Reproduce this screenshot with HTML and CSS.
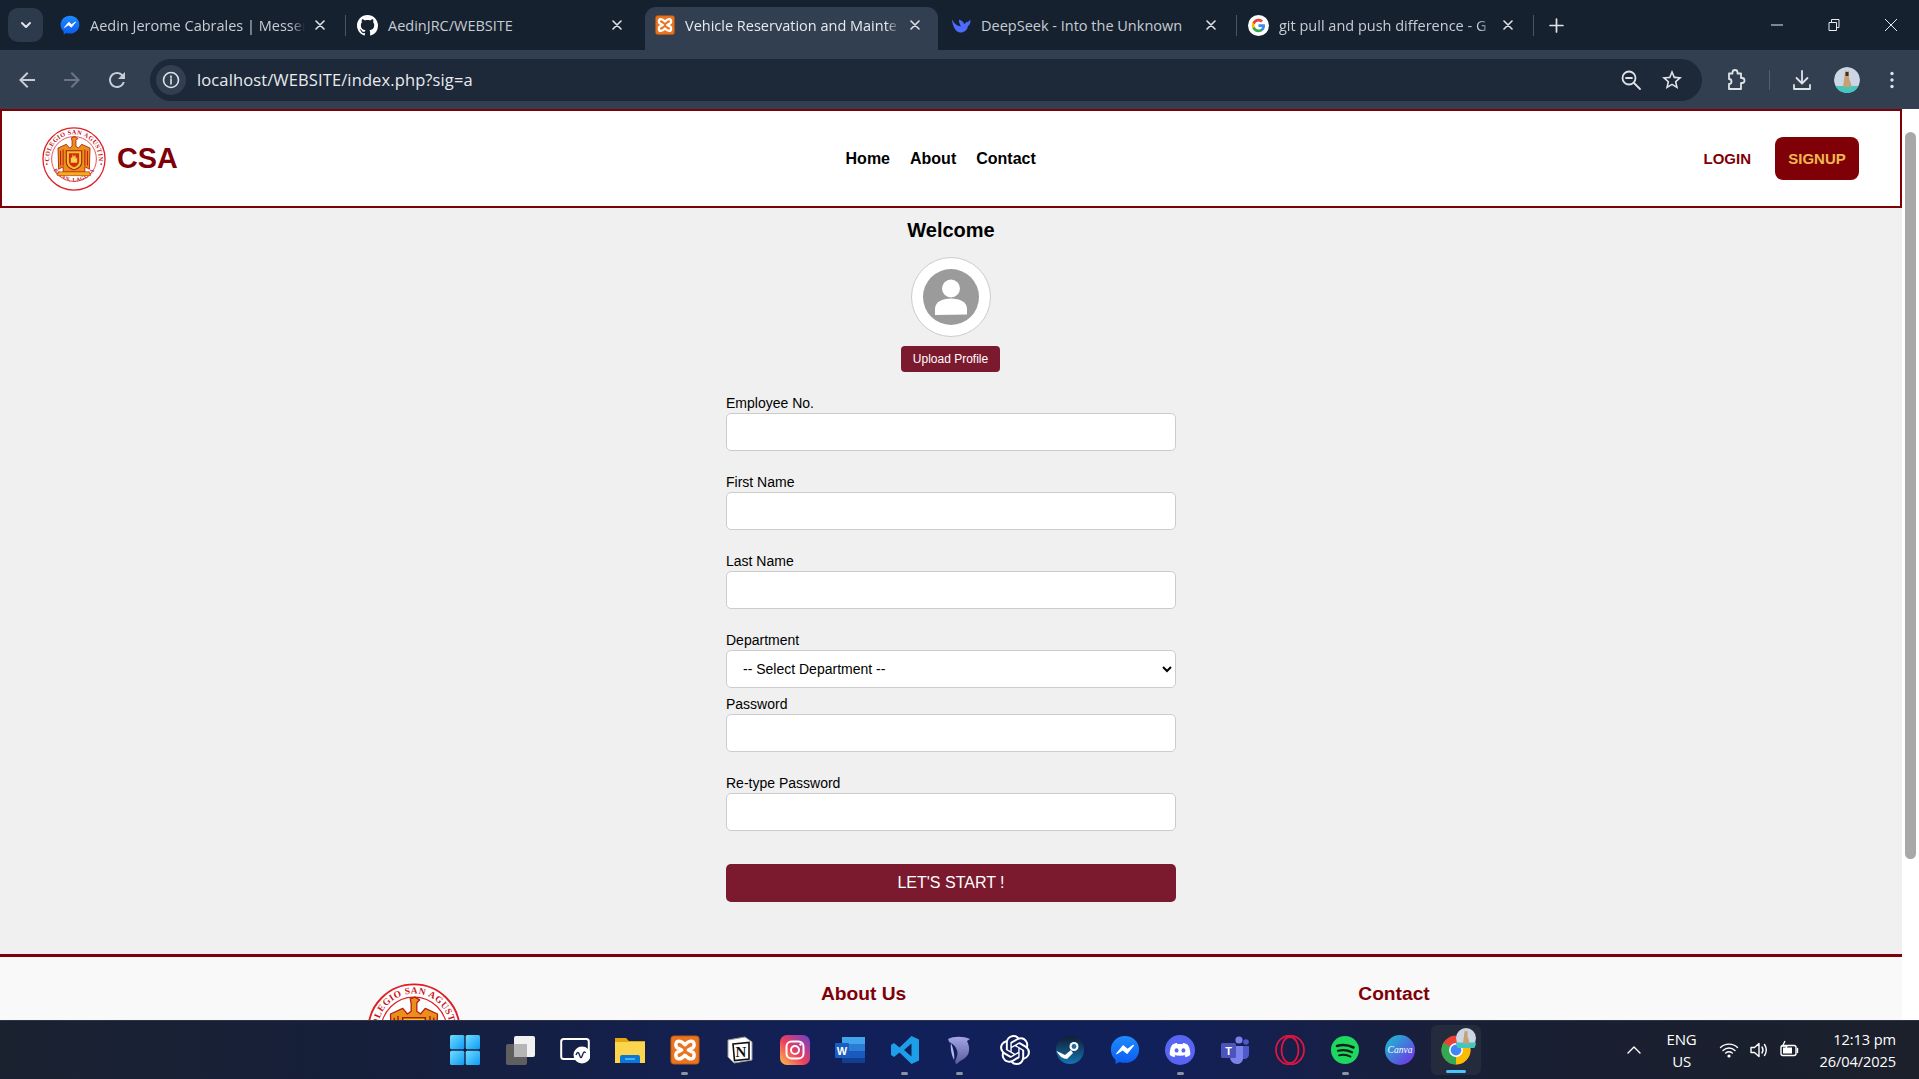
FILE: index.html
```html
<!DOCTYPE html>
<html lang="en">
<head>
<meta charset="utf-8">
<title>Vehicle Reservation and Maintenance</title>
<link rel="stylesheet" href="styles.css">
</head>
<body>
<svg class="defs" width="0" height="0" aria-hidden="true">
  <defs>
    <linearGradient id="msg" x1="0" y1="0" x2="0" y2="1"><stop offset="0" stop-color="#1f8bff"/><stop offset="1" stop-color="#0a5cf0"/></linearGradient>
    <linearGradient id="win" x1="0" y1="0" x2="1" y2="1"><stop offset="0" stop-color="#6fdcff"/><stop offset="1" stop-color="#0f9bf5"/></linearGradient>
    <linearGradient id="ig" x1="0" y1="1" x2="1" y2="0"><stop offset="0" stop-color="#fdc04a"/><stop offset=".45" stop-color="#ef3f5c"/><stop offset="1" stop-color="#6a3fd0"/></linearGradient>
    <linearGradient id="canva" x1="0" y1="0" x2="1" y2="1"><stop offset="0" stop-color="#12c6cf"/><stop offset="1" stop-color="#7a27e8"/></linearGradient>
    <linearGradient id="steam" x1="0" y1="0" x2="0" y2="1"><stop offset="0" stop-color="#111d33"/><stop offset="1" stop-color="#1474b0"/></linearGradient>
    <linearGradient id="dolphin" x1="0" y1="0" x2="0" y2="1"><stop offset="0" stop-color="#a3a5e6"/><stop offset="1" stop-color="#5c5a9c"/></linearGradient>
    <symbol id="seal" viewBox="0 0 100 100">
      <circle cx="50" cy="50" r="48.5" fill="#fff" stroke="#dd1f26" stroke-width="2"/>
      <circle cx="50" cy="50" r="35" fill="#fff" stroke="#dd1f26" stroke-width="1.2"/>
      <path id="sealTop" d="M12 56 A38.5 38.5 0 1 1 88 56" fill="none"/>
      <path id="sealBottom" d="M17 66 A38 38 0 0 0 83 66" fill="none"/>
      <text class="seal-text"><textPath href="#sealTop" startOffset="50%" text-anchor="middle">COLEGIO SAN AGUSTIN</textPath></text>
      <text class="seal-text seal-small"><textPath href="#sealBottom" startOffset="50%" text-anchor="middle">BIÑAN, LAGUNA</textPath></text>
      <circle cx="7.5" cy="58" r="1.4" fill="#dd1f26"/><circle cx="92.5" cy="58" r="1.4" fill="#dd1f26"/>
      <path d="M46 17 L51 15 L56 18 L53 21 L53 30 L57 33 L62 27 L75 33 L74 66 L67 62 L67 70 L33 70 L33 62 L26 66 L25 33 L38 27 L43 33 L47 30 L47 22 Z" fill="#e8901a" stroke="#b81f14" stroke-width="1.4" stroke-linejoin="round"/>
      <path d="M29 37 L29 60 M33 35 L33 60 M67 35 L67 60 M71 37 L71 60" stroke="#b81f14" stroke-width="1.6"/>
      <path d="M38 37 H62 V55 Q62 63 50 67 Q38 63 38 55 Z" fill="#f9c22a" stroke="#a51a12" stroke-width="1.6"/>
      <path d="M42 41 H58 V54 Q58 60 50 63 Q42 60 42 54 Z" fill="#d32a1a"/>
      <path d="M45 56 H55 V47 L53 50 L52 43 L50 47 L48 42 L47 49 L45 47 Z" fill="#f7d34b"/>
      <path d="M26 70 H74 L76 76 H24 Z" fill="#f3ab20" stroke="#b81f14" stroke-width=".9"/>
    </symbol>
    <symbol id="xampp" viewBox="0 0 32 32">
      <rect x="1" y="1" width="30" height="30" rx="3" fill="#ea7420"/>
      <rect x="1" y="1" width="30" height="30" rx="3" fill="none" stroke="#c0560f" stroke-width="1"/>
      <path d="M9.5 6.5 C5.5 6.5 5 13 9 14.2 L12.5 16 L9 17.8 C5 19 5.5 25.5 9.5 25.5 C12 25.5 14.2 23.6 16 21.6 C17.8 23.6 20 25.5 22.5 25.5 C26.5 25.5 27 19 23 17.8 L19.5 16 L23 14.2 C27 13 26.5 6.5 22.5 6.5 C20 6.5 17.8 8.4 16 10.4 C14.2 8.4 12 6.5 9.5 6.5 Z" fill="none" stroke="#fff" stroke-width="3.6" stroke-linejoin="round"/>
    </symbol>
    <symbol id="messenger" viewBox="0 0 32 32">
      <path d="M16 1 C7.5 1 1 7.2 1 15.6 C1 20 2.8 23.8 5.8 26.4 L6 31 L10.4 28.8 C12.2 29.4 14 29.7 16 29.7 C24.5 29.7 31 23.5 31 15.6 C31 7.2 24.5 1 16 1 Z" fill="url(#msg)"/>
      <path d="M7 20 L14 11.5 L18.6 15.3 L25 11 L18.2 19.6 L13.6 15.8 Z" fill="#fff" stroke="#fff" stroke-width="1.2" stroke-linejoin="round"/>
    </symbol>
  </defs>
</svg>

<div class="tabstrip">
  <div class="tab-search"><svg class="i12" viewBox="0 0 12 12"><path d="M2 4 L6 8 L10 4" class="ln2"/></svg></div>
  <div class="tab">
    <svg class="favicon" viewBox="0 0 32 32"><use href="#messenger"/></svg>
    <span class="tab-title">Aedin Jerome Cabrales | Messen</span>
    <svg class="tab-x" viewBox="0 0 10 10"><path d="M1 1 L9 9 M9 1 L1 9" class="ln15"/></svg>
  </div>
  <div class="tab tab-sep">
    <svg class="favicon favicon-lg" viewBox="0 0 16 16"><path fill="#fff" d="M8 0C3.58 0 0 3.58 0 8c0 3.54 2.29 6.53 5.47 7.59.4.07.55-.17.55-.38 0-.19-.01-.82-.01-1.49-2.01.37-2.53-.49-2.69-.94-.09-.23-.48-.94-.82-1.13-.28-.15-.68-.52-.01-.53.63-.01 1.08.58 1.23.82.72 1.21 1.87.87 2.33.66.07-.52.28-.87.51-1.07-1.78-.2-3.64-.89-3.64-3.95 0-.87.31-1.59.82-2.15-.08-.2-.36-1.02.08-2.12 0 0 .67-.21 2.2.82.64-.18 1.32-.27 2-.27.68 0 1.36.09 2 .27 1.53-1.04 2.2-.82 2.2-.82.44 1.1.16 1.92.08 2.12.51.56.82 1.27.82 2.15 0 3.07-1.87 3.75-3.65 3.95.29.25.54.73.54 1.48 0 1.07-.01 1.93-.01 2.2 0 .21.15.46.55.38A8.013 8.013 0 0016 8c0-4.42-3.58-8-8-8z"/></svg>
    <span class="tab-title tab-title-plain">AedinJRC/WEBSITE</span>
    <svg class="tab-x" viewBox="0 0 10 10"><path d="M1 1 L9 9 M9 1 L1 9" class="ln15"/></svg>
  </div>
  <div class="tab tab-active">
    <svg class="favicon" viewBox="0 0 32 32"><use href="#xampp"/></svg>
    <span class="tab-title tab-title-active">Vehicle Reservation and Mainte</span>
    <svg class="tab-x" viewBox="0 0 10 10"><path d="M1 1 L9 9 M9 1 L1 9" class="ln15"/></svg>
  </div>
  <div class="tab">
    <svg class="favicon" viewBox="0 0 24 24"><path fill="#4d6bfe" d="M1 5 C2 7 4 10 6 11.5 C8 13 10.5 14 12 13.4 C10.4 11 9.4 8.4 9.4 5.4 C12.4 6.4 15 8.4 16.2 11 C17 9.6 18 9 19.2 8.4 C21 8 22.2 7 23 5 C24 8.6 22.6 12 20.2 13.4 C20 17.6 16 21 11.2 21 C6 21 2 14 1 5 Z"/></svg>
    <span class="tab-title tab-title-plain">DeepSeek - Into the Unknown</span>
    <svg class="tab-x" viewBox="0 0 10 10"><path d="M1 1 L9 9 M9 1 L1 9" class="ln15"/></svg>
  </div>
  <div class="tab tab-sep">
    <svg class="favicon favicon-lg" viewBox="0 0 24 24"><circle cx="12" cy="12" r="12" fill="#fff"/><g transform="translate(3.6 3.6) scale(.7)"><path fill="#4285f4" d="M22.56 12.25c0-.78-.07-1.53-.2-2.25H12v4.26h5.92c-.26 1.37-1.04 2.53-2.21 3.31v2.77h3.57c2.08-1.92 3.28-4.74 3.28-8.09z"/><path fill="#34a853" d="M12 23c2.97 0 5.46-.98 7.28-2.66l-3.57-2.77c-.98.66-2.23 1.06-3.71 1.06-2.86 0-5.29-1.93-6.16-4.53H2.18v2.84C3.99 20.53 7.7 23 12 23z"/><path fill="#fbbc05" d="M5.84 14.09c-.22-.66-.35-1.36-.35-2.09s.13-1.43.35-2.09V7.07H2.18C1.43 8.55 1 10.22 1 12s.43 3.45 1.18 4.93l2.85-2.22.81-.62z"/><path fill="#ea4335" d="M12 5.38c1.62 0 3.06.56 4.21 1.64l3.15-3.15C17.45 2.09 14.97 1 12 1 7.7 1 3.99 3.47 2.18 7.07l3.66 2.84c.87-2.6 3.3-4.53 6.16-4.53z"/></g></svg>
    <span class="tab-title">git pull and push difference - G</span>
    <svg class="tab-x" viewBox="0 0 10 10"><path d="M1 1 L9 9 M9 1 L1 9" class="ln15"/></svg>
  </div>
  <div class="tab-new tab-sep"><svg class="i14" viewBox="0 0 14 14"><path d="M7 1 V13 M1 7 H13" class="ln15"/></svg></div>
  <div class="win-controls">
    <svg class="win-ctl" viewBox="0 0 14 14"><path d="M1 7 H13" class="ln1"/></svg>
    <svg class="win-ctl" viewBox="0 0 14 14"><path d="M2 4.5 H9.5 V12.5 H2 Z M4.5 4.5 V1.5 H12 V9.5 H9.5" class="ln1"/></svg>
    <svg class="win-ctl" viewBox="0 0 14 14"><path d="M1 1 L13 13 M13 1 L1 13" class="ln1"/></svg>
  </div>
</div>

<div class="toolbar">
  <svg class="tb-icon" viewBox="0 0 24 24"><path fill="#c7ccd3" d="M20 11H7.83l5.59-5.59L12 4l-8 8 8 8 1.41-1.41L7.83 13H20v-2z"/></svg>
  <svg class="tb-icon tb-dim" viewBox="0 0 24 24"><path fill="#6e7683" d="M4 11h12.17l-5.59-5.59L12 4l8 8-8 8-1.41-1.41L16.17 13H4v-2z"/></svg>
  <svg class="tb-icon" viewBox="0 0 24 24"><path fill="#c7ccd3" d="M17.65 6.35A7.958 7.958 0 0 0 12 4c-4.42 0-7.99 3.58-7.99 8s3.57 8 7.99 8c3.73 0 6.84-2.55 7.73-6h-2.08A5.99 5.99 0 0 1 12 18c-3.31 0-6-2.69-6-6s2.69-6 6-6c1.66 0 3.14.69 4.22 1.78L13 11h7V4l-2.35 2.35z"/></svg>
  <div class="omnibox">
    <span class="info-chip"><svg class="i18" viewBox="0 0 18 18"><circle cx="9" cy="9" r="7.5" class="ln15"/><path d="M9 8 V13 M9 5 V6.6" class="ln15"/></svg></span>
    <span class="url">localhost/WEBSITE/index.php?sig=a</span>
    <svg class="omni-icon" viewBox="0 0 24 24"><circle cx="10" cy="10" r="6.5" class="ln18"/><path d="M7 10 H13 M15 15 L21 21" class="ln18"/></svg>
    <svg class="omni-icon" viewBox="0 0 24 24"><path fill="#dfe3e8" d="M22 9.24l-7.19-.62L12 2 9.19 8.63 2 9.24l5.46 4.73L5.82 21 12 17.27 18.18 21l-1.63-7.03L22 9.24zM12 15.4l-3.76 2.27 1-4.28-3.32-2.88 4.38-.38L12 6.1l1.71 4.04 4.38.38-3.32 2.88 1 4.28L12 15.4z"/></svg>
  </div>
  <svg class="tb-icon tb-ext" viewBox="0 0 24 24"><path d="M6 5.5 H9.5 V4.5 A2.5 2.5 0 0 1 14.5 4.5 V5.5 H18 V10 H19 A2.5 2.5 0 0 1 19 15 H18 V21 H6 V16 A2.5 2.5 0 0 0 6 11 Z" class="ln18"/></svg>
  <span class="tb-sep"></span>
  <svg class="tb-icon tb-dl" viewBox="0 0 24 24"><path d="M12 3 V15 M6.5 10 L12 15.5 L17.5 10 M4 17 V21 H20 V17" class="ln18"/></svg>
  <svg class="tb-avatar" viewBox="0 0 26 26"><circle cx="13" cy="13" r="13" fill="#cdd6e4"/><path d="M0 19 H26 A13 13 0 0 1 0 19 Z" fill="#44c5bd"/><path d="M11 6 L11.5 3 L13 5 L14.5 3 L15 6 L15 11 L18 20 H9 L10 13 Z" fill="#c7a074"/><path d="M11.5 5 h3 v4 h-3 z" fill="#3d3027"/></svg>
  <svg class="tb-icon tb-menu" viewBox="0 0 24 24"><circle cx="12" cy="5.5" r="1.7" fill="#dfe3e8"/><circle cx="12" cy="12" r="1.7" fill="#dfe3e8"/><circle cx="12" cy="18.5" r="1.7" fill="#dfe3e8"/></svg>
</div>

<div class="viewport">
  <div class="page">
    <header class="site-header">
      <div class="brand">
        <svg class="brand-logo" viewBox="0 0 100 100"><use href="#seal"/></svg>
        <span class="brand-name">CSA</span>
      </div>
      <nav class="site-nav">
        <a class="nav-link">Home</a>
        <a class="nav-link">About</a>
        <a class="nav-link">Contact</a>
      </nav>
      <div class="auth">
        <a class="login">LOGIN</a>
        <a class="signup">SIGNUP</a>
      </div>
    </header>

    <main class="signup-main">
      <h2 class="welcome">Welcome</h2>
      <div class="avatar">
        <svg class="avatar-icon" viewBox="0 0 56 56"><circle cx="28" cy="28" r="28" fill="#9b9b9b"/><circle cx="28" cy="19.5" r="9" fill="#fff"/><path d="M12 46 V40 C12 33 19 29.5 28 29.5 C37 29.5 44 33 44 40 V45.5 Z" fill="#fff"/></svg>
      </div>
      <button class="upload-btn" type="button">Upload Profile</button>
      <form class="signup-form">
        <div class="field"><label class="field-label">Employee No.</label><input class="field-input" type="text"></div>
        <div class="field"><label class="field-label">First Name</label><input class="field-input" type="text"></div>
        <div class="field"><label class="field-label">Last Name</label><input class="field-input" type="text"></div>
        <div class="field field-tight"><label class="field-label">Department</label>
          <select class="field-input field-select"><option>-- Select Department --</option></select></div>
        <div class="field"><label class="field-label">Password</label><input class="field-input" type="password"></div>
        <div class="field"><label class="field-label">Re-type Password</label><input class="field-input" type="password"></div>
        <button class="start-btn" type="button">LET'S START !</button>
      </form>
    </main>

    <footer class="site-footer">
      <svg class="footer-logo" viewBox="0 0 100 100"><use href="#seal"/></svg>
      <h3 class="footer-head footer-about">About Us</h3>
      <h3 class="footer-head footer-contact">Contact</h3>
    </footer>
  </div>
  <div class="scrollbar"><div class="scroll-thumb"></div></div>
</div>

<div class="taskbar">
  <div class="task-icons">
    <div class="task"><svg class="tico" viewBox="0 0 30 30"><rect x="0" y="0" width="14.3" height="14.3" rx="1.5" fill="url(#win)"/><rect x="15.7" y="0" width="14.3" height="14.3" rx="1.5" fill="url(#win)"/><rect x="0" y="15.7" width="14.3" height="14.3" rx="1.5" fill="url(#win)"/><rect x="15.7" y="15.7" width="14.3" height="14.3" rx="1.5" fill="url(#win)"/></svg></div>
    <div class="task"><svg class="tico" viewBox="0 0 30 30"><rect x="9" y="1" width="21" height="21" rx="2" fill="#f1f1f1"/><rect x="1" y="9" width="21" height="21" rx="2" fill="#5f5f5f"/><rect x="9" y="9" width="13" height="13" fill="#b5b5b5"/></svg></div>
    <div class="task"><svg class="tico" viewBox="0 0 30 30"><rect x="1.2" y="4" width="27.6" height="20" rx="2.5" fill="none" stroke="#fff" stroke-width="2"/><circle cx="22" cy="20" r="8.5" fill="#fff"/><path d="M16 20 q2 -5 3.5 0 t3 0 t3 -2" fill="none" stroke="#1a2550" stroke-width="1.4"/></svg></div>
    <div class="task"><svg class="tico" viewBox="0 0 30 30"><path d="M0 3 H11 L14 6 H30 V28 H0 Z" fill="#e3a80e"/><rect x="0" y="7" width="30" height="21" fill="#fcd54f"/><path d="M5 28 V22 Q5 20 7 20 H23 Q25 20 25 22 V28 Z" fill="#0a78d4"/><path d="M10 24 H20" stroke="#60c4ff" stroke-width="1.5"/></svg></div>
    <div class="task task-run"><svg class="tico" viewBox="0 0 32 32"><use href="#xampp"/></svg></div>
    <div class="task"><svg class="tico" viewBox="0 0 30 30"><path d="M3 5 L20 2 L27 7 V25 L9 28 L3 22 Z" fill="#fff" stroke="#999" stroke-width="1"/><path d="M8 9 L24 7.5 V24 L9.5 25.5 Z" fill="#fff" stroke="#111" stroke-width="1.6"/><text x="16" y="22" class="notion-n">N</text></svg></div>
    <div class="task"><svg class="tico" viewBox="0 0 30 30"><rect width="30" height="30" rx="7" fill="url(#ig)"/><rect x="6.5" y="6.5" width="17" height="17" rx="5" fill="none" stroke="#fff" stroke-width="2"/><circle cx="15" cy="15" r="4" fill="none" stroke="#fff" stroke-width="2"/><circle cx="20.5" cy="9.5" r="1.2" fill="#fff"/></svg></div>
    <div class="task"><svg class="tico" viewBox="0 0 30 30"><rect x="7" y="2" width="23" height="7" fill="#41a5ee"/><rect x="7" y="9" width="23" height="7" fill="#2b7cd3"/><rect x="7" y="16" width="23" height="7" fill="#185abd"/><rect x="7" y="23" width="23" height="5" fill="#103f91"/><rect x="0" y="8" width="14" height="15" rx="1" fill="#1a5cc0"/><text x="7" y="20" class="word-w">W</text></svg></div>
    <div class="task task-run"><svg class="tico" viewBox="0 0 30 30"><path d="M21.5 1 L29 4.5 V25.5 L21.5 29 L9.5 17.5 L4 22 L1 20 V10 L4 8 L9.5 12.5 Z M21.5 8.5 L14 15 L21.5 21.5 Z" fill="#1e9ee8" fill-rule="evenodd"/></svg></div>
    <div class="task task-run"><svg class="tico" viewBox="0 0 30 30"><path d="M3 4 C9 1 18 1 25 4 L22 6 C25 12 25 18 21 22 C18 25 14 26 12 29 C10 29 10 26 11 24 C13 20 13 16 11 13 C10 11 8 9 6 8 C5 8 4 7 3 4 Z" fill="url(#dolphin)"/><path d="M6 8 C8 13 10 20 9 25 C7 21 5 14 6 8 Z" fill="#b7b8ee"/></svg></div>
    <div class="task"><svg class="tico" viewBox="0 0 24 24"><path fill="#fff" d="M22.282 9.821a5.985 5.985 0 0 0-.516-4.91 6.046 6.046 0 0 0-6.51-2.9A6.065 6.065 0 0 0 4.981 4.18a5.985 5.985 0 0 0-3.998 2.9 6.046 6.046 0 0 0 .743 7.097 5.98 5.98 0 0 0 .51 4.911 6.051 6.051 0 0 0 6.515 2.9A5.985 5.985 0 0 0 13.26 24a6.056 6.056 0 0 0 5.772-4.206 5.99 5.99 0 0 0 3.997-2.9 6.056 6.056 0 0 0-.747-7.073zM13.26 22.43a4.476 4.476 0 0 1-2.876-1.04l.141-.081 4.779-2.758a.795.795 0 0 0 .392-.681v-6.737l2.02 1.168a.071.071 0 0 1 .038.052v5.583a4.504 4.504 0 0 1-4.494 4.494zM3.6 18.304a4.47 4.47 0 0 1-.535-3.014l.142.085 4.783 2.759a.771.771 0 0 0 .78 0l5.843-3.369v2.332a.08.08 0 0 1-.033.062L9.74 19.95a4.5 4.5 0 0 1-6.14-1.646zM2.34 7.896a4.485 4.485 0 0 1 2.366-1.973V11.6a.766.766 0 0 0 .388.676l5.815 3.355-2.02 1.168a.076.076 0 0 1-.071 0l-4.83-2.786A4.504 4.504 0 0 1 2.34 7.872zm16.597 3.855l-5.833-3.387L15.119 7.2a.076.076 0 0 1 .071 0l4.83 2.791a4.494 4.494 0 0 1-.676 8.105v-5.678a.79.79 0 0 0-.407-.667zm2.01-3.023l-.141-.085-4.774-2.782a.776.776 0 0 0-.785 0L9.409 9.23V6.897a.066.066 0 0 1 .028-.061l4.83-2.787a4.5 4.5 0 0 1 6.68 4.66zm-12.64 4.135l-2.02-1.164a.08.08 0 0 1-.038-.057V6.075a4.5 4.5 0 0 1 7.375-3.453l-.142.08L8.704 5.46a.795.795 0 0 0-.393.681zm1.097-2.365l2.602-1.5 2.607 1.5v2.999l-2.597 1.5-2.607-1.5Z"/></svg></div>
    <div class="task"><svg class="tico" viewBox="0 0 30 30"><circle cx="15" cy="15" r="14" fill="url(#steam)"/><circle cx="19" cy="11.5" r="4.5" fill="#fff"/><circle cx="19" cy="11.5" r="2.4" fill="#2a6a99"/><path d="M1.5 16 L10 20 L16 15 L18 18 L12 24 C8 24 4 21 1.5 16 Z" fill="#fff"/></svg></div>
    <div class="task"><svg class="tico" viewBox="0 0 32 32"><use href="#messenger"/></svg></div>
    <div class="task task-run"><svg class="tico" viewBox="0 0 30 30"><circle cx="15" cy="15" r="15" fill="#5865f2"/><path d="M7 10 C9 8.6 11 8 12 8 L12.6 9.2 C14.2 9 15.8 9 17.4 9.2 L18 8 C19 8 21 8.6 23 10 C25 13.5 25.6 17 25.2 20 C23.6 21.2 22 21.8 20.6 22.2 L19.6 20.4 C20.2 20.2 20.8 19.8 21.2 19.6 C17.5 21.2 12.5 21.2 8.8 19.6 C9.2 19.8 9.8 20.2 10.4 20.4 L9.4 22.2 C8 21.8 6.4 21.2 4.8 20 C4.4 17 5 13.5 7 10 Z" fill="#fff"/><ellipse cx="11.6" cy="15.4" rx="1.9" ry="2.2" fill="#5865f2"/><ellipse cx="18.4" cy="15.4" rx="1.9" ry="2.2" fill="#5865f2"/></svg></div>
    <div class="task"><svg class="tico" viewBox="0 0 30 30"><circle cx="19" cy="5" r="3.6" fill="#7b83eb"/><circle cx="26" cy="7" r="2.8" fill="#5059c9"/><path d="M21 11 H29 V19 C29 22 27 24 24 24 H21 Z" fill="#5059c9"/><path d="M10 11 H23 V23 C23 27 20 29 17 29 C13 29 10 26 10 22 Z" fill="#7b83eb"/><rect x="1" y="8" width="15" height="15" rx="1.5" fill="#4b53bc"/><text x="8.5" y="20" class="teams-t">T</text></svg></div>
    <div class="task"><svg class="tico" viewBox="0 0 30 30"><ellipse cx="15" cy="15" rx="14" ry="14.5" fill="none" stroke="#e0153f" stroke-width="1.8"/><ellipse cx="15" cy="15" rx="8.5" ry="13" fill="none" stroke="#e0153f" stroke-width="1.8"/></svg></div>
    <div class="task task-run"><svg class="tico" viewBox="0 0 30 30"><circle cx="15" cy="15" r="14" fill="#1ed760"/><g fill="none" stroke="#0d1f16" stroke-linecap="round"><path d="M7 11 C12 9.5 18 9.8 23.5 12.5" stroke-width="2.6"/><path d="M8 15.8 C12.5 14.5 17.5 15 22 17.3" stroke-width="2.2"/><path d="M9 20.3 C13 19.3 17 19.7 20.5 21.6" stroke-width="1.8"/></g></svg></div>
    <div class="task"><svg class="tico" viewBox="0 0 30 30"><circle cx="15" cy="15" r="15" fill="url(#canva)"/><text x="15" y="18" class="canva-t">Canva</text></svg></div>
    <div class="task task-active">
      <svg class="tico" viewBox="0 0 30 30"><circle cx="15" cy="15" r="14.5" fill="#ea4335"/><path d="M15 15 L27.5 7.7 A14.5 14.5 0 0 1 15 29.5 Z" fill="#fbbc05"/><path d="M15 15 L15 29.5 A14.5 14.5 0 0 1 2.5 7.7 Z" fill="#34a853"/><circle cx="15" cy="15" r="7" fill="#fff"/><circle cx="15" cy="15" r="5.4" fill="#4285f4"/></svg>
      <svg class="task-badge" viewBox="0 0 26 26"><circle cx="13" cy="13" r="13" fill="#cdd6e4"/><path d="M0 19 H26 A13 13 0 0 1 0 19 Z" fill="#44c5bd"/><path d="M11 6 L11.5 3 L13 5 L14.5 3 L15 6 L15 11 L18 20 H9 L10 13 Z" fill="#c7a074"/></svg>
    </div>
  </div>
  <div class="tray">
    <svg class="tray-caret" viewBox="0 0 14 14"><path d="M1 10 L7 4 L13 10" class="ln-w"/></svg>
    <div class="lang"><span>ENG</span><span>US</span></div>
    <svg class="tray-ico" viewBox="0 0 20 20"><path d="M1.5 7.5 C6 3 14 3 18.5 7.5 M4 10.5 C7.5 7.2 12.5 7.2 16 10.5 M6.7 13 C8.7 11.4 11.3 11.4 13.3 13" class="ln-w"/><circle cx="10" cy="16" r="1.6" fill="#fff"/></svg>
    <svg class="tray-ico" viewBox="0 0 20 20"><path d="M2 7.5 H5.5 L10 3.5 V16.5 L5.5 12.5 H2 Z M13 7 Q15 10 13 13 M15.5 4.5 Q19 10 15.5 15.5" class="ln-w"/></svg>
    <svg class="tray-ico" viewBox="0 0 20 20"><rect x="2" y="5.5" width="15" height="10" rx="2" class="ln-w"/><rect x="4" y="7.5" width="9" height="6" fill="#fff"/><path d="M18.5 8.5 V12.5" class="ln-w"/><path d="M6 1 L3.5 6 H8 L5.5 11" fill="none" stroke="#fff" stroke-width="1.3"/></svg>
    <div class="clock"><span>12:13 pm</span><span>26/04/2025</span></div>
  </div>
</div>
</body>
</html>
```
FILE: styles.css
```css
* { box-sizing: border-box; }
html, body { margin: 0; padding: 0; height: 100%; }
body {
  height: 1079px;
  overflow: hidden;
  display: flex;
  flex-direction: column;
  font-family: "Liberation Sans", Arial, sans-serif;
  background: #f0f0f0;
}
.defs { position: absolute; }
.ln1, .ln15, .ln18, .ln2, .ln-w { fill: none; stroke: #dfe3e8; stroke-linecap: round; stroke-linejoin: round; }
.ln1 { stroke-width: 1; stroke: #e8ebef; stroke-linecap: butt; }
.ln15 { stroke-width: 1.6; }
.ln18 { stroke-width: 1.8; }
.ln2 { stroke-width: 2; }
.ln-w { stroke: #fff; stroke-width: 1.4; }

/* browser tab strip */
.tabstrip {
  height: 50px;
  flex: none;
  background: #162130;
  display: flex;
  align-items: flex-end;
  font-family: "Open Sans", sans-serif;
  padding-left: 8px;
}
.tab-search {
  width: 35px; height: 34px;
  align-self: flex-start;
  margin-top: 8px;
  margin-right: 6px;
  background: #2d3a4b;
  border-radius: 10px;
  display: flex; align-items: center; justify-content: center;
}
.i12 { width: 12px; height: 12px; }
.i14 { width: 15px; height: 15px; }
.i18 { width: 18px; height: 18px; }
.tab {
  width: 297px; height: 43px;
  display: flex; align-items: center;
  padding: 0 21px 7px 11px;
  position: relative;
  border-radius: 11px 11px 0 0;
}
.tab-sep::before {
  content: "";
  position: absolute;
  left: -1px; top: 8px;
  width: 1px; height: 21px;
  background: #4a5563;
}
.tab-active { background: #323f50; width: 293px; margin: 0 2px; padding-right: 18px; padding-left: 10px; }
.favicon { width: 20px; height: 20px; flex: none; margin-right: 10px; }
.favicon-lg { width: 21px; height: 21px; margin-right: 10px; }
.tab-title {
  flex: 1;
  min-width: 0;
  white-space: nowrap;
  font-size: 14.5px;
  color: #c6ccd3;
  -webkit-mask-image: linear-gradient(to right, #000 calc(100% - 14px), transparent 100%);
  mask-image: linear-gradient(to right, #000 calc(100% - 14px), transparent 100%);
}
.tab-title-plain { -webkit-mask-image: none; mask-image: none; }
.tab-title-active { color: #e6e9ed; }
.tab-x { width: 10px; height: 10px; flex: none; margin-left: 10px; }
.tab-new { width: 44px; height: 43px; position: relative; display: flex; align-items: center; justify-content: center; padding-bottom: 7px; }
.win-controls {
  margin-left: auto;
  align-self: center;
  display: flex;
  align-items: center;
  gap: 43px;
  padding-right: 21px;
}
.win-ctl { width: 14px; height: 14px; }

/* toolbar */
.toolbar {
  height: 59px;
  flex: none;
  background: #323f50;
  display: flex;
  align-items: center;
  padding: 0 15px;
}
.tb-icon { width: 24px; height: 24px; flex: none; }
.tb-dim { margin-left: 21px; }
.tb-icon + .tb-icon { margin-left: 21px; }
.omnibox {
  width: 1552px;
  height: 42px;
  margin-left: 21px;
  background: #1d2838;
  border-radius: 21px;
  display: flex;
  align-items: center;
  padding: 0 18px 0 6px;
  flex: none;
}
.info-chip {
  width: 30px; height: 30px;
  border-radius: 50%;
  background: #323f50;
  display: flex; align-items: center; justify-content: center;
  flex: none;
}
.url {
  margin-left: 11px;
  flex: 1;
  color: #e8ebef;
  font-family: "Open Sans", sans-serif;
  font-size: 16.5px;
  letter-spacing: .12px;
}
.omni-icon { width: 24px; height: 24px; flex: none; margin-left: 17px; }
.tb-ext { margin-left: 21px; }
.tb-sep { width: 1px; height: 20px; background: #55606f; margin-left: 22px; flex: none; }
.tb-dl { margin-left: 20px; }
.tb-avatar { width: 26px; height: 26px; margin-left: 20px; flex: none; border-radius: 50%; }
.tb-menu { margin-left: 20px; }

/* page viewport */
.viewport { flex: 1; min-height: 0; display: flex; overflow: hidden; }
.page { flex: 1; min-width: 0; overflow: hidden; background: #f0f0f0; }
.scrollbar { width: 17px; flex: none; background: #fff; padding: 23px 3px 0; }
.scroll-thumb { height: 727px; background: #a8a8a8; border-radius: 6px; }

.site-header {
  height: 99px;
  background: #fff;
  border: 2px solid #800008;
  display: flex;
  align-items: center;
  justify-content: space-between;
  padding: 0 41px 0 40px;
}
.brand { display: flex; align-items: center; gap: 11px; }
.brand-logo { width: 64px; height: 64px; flex: none; }
.seal-text { font-family: "Liberation Serif", serif; font-size: 10px; font-weight: 700; fill: #c8161d; letter-spacing: .6px; }
.seal-small { font-size: 8.5px; }
.brand-name { font-size: 28.8px; font-weight: 700; color: #800008; }
.site-nav { display: flex; gap: 20px; }
.nav-link { font-size: 16px; font-weight: 700; color: #000; }
.auth { display: flex; align-items: center; gap: 24px; }
.login { font-size: 15px; font-weight: 700; color: #800008; }
.signup {
  width: 84px; height: 43px;
  background: #800008;
  color: #eeb84f;
  font-size: 15px;
  font-weight: 700;
  border-radius: 8px;
  display: flex; align-items: center; justify-content: center;
}

.signup-main { display: flex; flex-direction: column; align-items: center; }
.welcome { margin: 11px 0 15px; font-size: 20px; line-height: 23px; font-weight: 700; color: #000; }
.avatar {
  width: 80px; height: 80px;
  border-radius: 50%;
  background: #fff;
  border: 1px solid #ccc;
  display: flex; align-items: center; justify-content: center;
}
.avatar-icon { width: 56px; height: 56px; }
.upload-btn {
  margin: 9px 1px 0 0;
  width: 99px; height: 26px;
  border: 0;
  padding: 0;
  border-radius: 4px;
  background: #7b1a2e;
  color: #fff;
  font-family: inherit;
  font-size: 12px;
}
.signup-form { width: 450px; margin-top: 23px; display: flex; flex-direction: column; }
.field { margin-bottom: 23px; display: flex; flex-direction: column; }
.field-tight { margin-bottom: 8px; }
.field-label { font-size: 14px; line-height: 16px; color: #000; margin-bottom: 2px; }
.field-input {
  width: 450px; height: 38px;
  border: 1px solid #ccc;
  border-radius: 5px;
  background: #fff;
  padding: 0 12px;
  font-family: inherit;
  font-size: 14px;
  color: #000;
}
.start-btn {
  margin-top: 10px;
  height: 38px;
  border: 0;
  border-radius: 5px;
  background: #7b1a2e;
  color: #fff;
  font-family: inherit;
  font-size: 16px;
}

.site-footer {
  margin-top: 52px;
  height: 200px;
  background: #f9f9f9;
  border-top: 3px solid #800008;
  display: flex;
  align-items: flex-start;
  padding: 26px 0 0 367px;
}
.footer-logo { width: 94px; height: 94px; flex: none; }
.footer-head { margin: 0; font-size: 19.2px; line-height: 22px; font-weight: 700; color: #800008; }
.footer-about { margin-left: 360px; }
.footer-contact { margin-left: 452px; }

/* windows taskbar */
.taskbar {
  height: 59px;
  flex: none;
  border-top: 1px solid #2c3547;
  background: linear-gradient(90deg, #1a2230 0%, #161f3b 20%, #12205a 45%, #12205a 60%, #191f33 78%, #1b202b 100%);
  display: flex;
  align-items: center;
  padding-left: 437px;
  color: #fff;
}
.task-icons { display: flex; align-items: center; }
.task { width: 55.05px; height: 50px; display: flex; align-items: center; justify-content: center; position: relative; }
.tico { width: 30px; height: 30px; }
.task-run::after, .task-active::after {
  content: "";
  position: absolute;
  bottom: 0;
  left: 50%;
  width: 7px; height: 3px;
  margin-left: -3.5px;
  border-radius: 2px;
  background: #8b93a3;
}
.task-active { width: 50px; margin-left: 3px; background: #232b3c; border-radius: 6px; }
.task-active::after { width: 20px; margin-left: -10px; background: #4cc2ff; bottom: 2px; }
.task-badge { position: absolute; right: 5px; top: 3px; width: 20px; height: 20px; }
.notion-n { font-family: "Liberation Serif", serif; font-weight: 700; font-size: 15px; text-anchor: middle; fill: #111; }
.word-w { font-family: "Liberation Sans", sans-serif; font-weight: 700; font-size: 11px; text-anchor: middle; fill: #fff; }
.teams-t { font-family: "Liberation Sans", sans-serif; font-weight: 700; font-size: 11px; text-anchor: middle; fill: #fff; }
.canva-t { font-family: "Liberation Serif", serif; font-style: italic; font-size: 9.5px; text-anchor: middle; fill: #fff; }

.tray { margin-left: auto; display: flex; align-items: center; padding-right: 23px; font-family: "Open Sans", sans-serif; font-size: 14px; }
.tray-caret { width: 14px; height: 14px; margin-right: 26px; }
.lang { display: flex; flex-direction: column; align-items: center; line-height: 22px; margin-right: 22px; font-size: 15px; letter-spacing: -.2px; }
.tray-ico { width: 20px; height: 20px; margin-right: 10px; }
.clock { display: flex; flex-direction: column; align-items: flex-end; line-height: 22px; margin-left: 11px; font-size: 14.6px; letter-spacing: -.1px; }
```
